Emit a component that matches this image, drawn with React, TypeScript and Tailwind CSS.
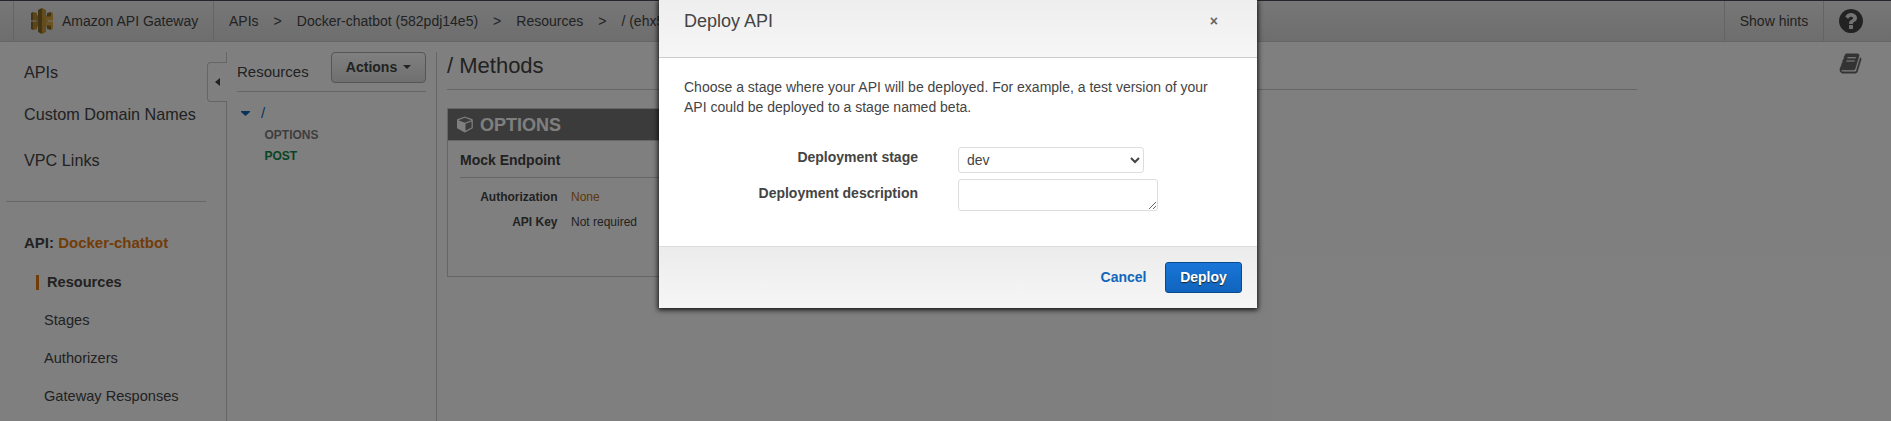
import React from "react";

const CUBE =
  "M896 1629l640-349v-636l-640 233v752zM832 765l698-254-698-254-698 254zM1664 512v768q0 35-18 65t-49 47l-704 384q-28 16-61 16t-61-16l-704-384q-31-17-49-47t-18-65v-768q0-40 23-73t61-47l704-256q22-8 44-8t44 8l704 256q38 14 61 47t23 73z";
const QUESTION =
  "M1024 1376v-192q0-14-9-23t-23-9h-192q-14 0-23 9t-9 23v192q0 14 9 23t23 9h192q14 0 23-9t9-23zm256-672q0-88-55.5-163t-138.5-116-170-41q-243 0-371 213-15 24 8 42l132 100q7 6 19 6 16 0 25-12 53-68 86-92 34-24 86-24 48 0 85.5 26t37.5 59q0 38-20 61t-68 45q-63 28-115.5 86.5t-52.5 125.5v36q0 14 9 23t23 9h192q14 0 23-9t9-23q0-19 21.5-49.5t54.5-49.5q32-18 49-28.5t46-35 44.5-48 28-60.5 12.5-81zm384 192q0 209-103 385.5t-279.5 279.5-385.5 103-385.5-103-279.5-279.5-103-385.5 103-385.5 279.5-279.5 385.5-103 385.5 103 279.5 279.5 103 385.5z";
const BOOK =
  "M1703 478q40 57 18 129l-275 906q-19 64-76.5 107.5t-122.5 43.5h-923q-77 0-148.5-53.5t-99.5-131.5q-24-67-2-127 0-4 3-27t4-37q1-8-3-21.5t-3-19.5q2-11 8-21t16.5-23.5 16.5-23.5q23-38 45-91.5t30-91.5q3-10 .5-30t-.5-28q3-11 17-28t17-23q21-36 42-92t25-90q1-9-2.5-32t.5-28q4-13 22-30.5t22-22.5q19-26 42.5-84.5t27.5-96.5q1-8-3-25.5t-2-26.5q2-8 9-18t18-23 17-21q8-12 16.5-30.5t15-35 16-36 19.5-32 26.5-23.5 36-11.5 47.5 5.5l-1 3q38-9 51-9h761q74 0 114 56t18 130l-274 906q-36 119-71.5 153.5t-128.5 34.5h-869q-27 0-38 15-11 16-1 43 24 70 144 70h923q29 0 56-15.5t35-41.5l300-987q7-22 5-57 38 15 59 43zm-1064 2q-4 13 2 22.5t20 9.5h608q13 0 25.5-9.5t16.5-22.5l21-64q4-13-2-22.5t-20-9.5h-608q-13 0-25.5 9.5t-16.5 22.5zm-83 256q-4 13 2 22.5t20 9.5h608q13 0 25.5-9.5t16.5-22.5l21-64q4-13-2-22.5t-20-9.5h-608q-13 0-25.5 9.5t-16.5 22.5z";

function GatewayLogo() {
  return (
    <svg width="22" height="26" viewBox="0 0 22 26">
      <path fill="#876929" d="M0 5l2-1v8.5H0zM0 13.5h2V22l-2-1zM5 7.5h12v5H5zM5 13.5h12v5H5z" />
      <path fill="#B88A30" d="M2 4l4 1v3h1v4.5H2zM2 22l4-1v-3h1v-4.5H2z" />
      <path fill="#D9A741" d="M20 4l2 1v7.5h-7V8h5zM20 22l2-1v-7.5h-7V18h5z" />
      <path fill="#876929" d="M16 5l4-1v4.5h-4zM16 17.5h4V22l-4-1z" />
      <path fill="#876929" d="M7 2l4-2v26l-4-2z" />
      <path fill="#C7983A" d="M11 0l4 2v22l-4 2z" />
    </svg>
  );
}

function Header() {
  return (
    <header className="flex h-[42px] shrink-0 border-b border-t border-b-[#ccc] border-t-[#4a4a5a] bg-linear-to-b from-[#eeeeee] to-[#dcdcdc] text-sm">
      <div className="w-[13px]" />
      <div className="flex w-[201px] items-center border-x border-[#c8c8c8] pl-[17px]">
        <GatewayLogo />
        <span className="ml-[9px]">Amazon API Gateway</span>
      </div>
      <nav className="flex grow items-center gap-[15px] whitespace-nowrap pl-[15px]">
        <span>APIs</span>
        <span>&gt;</span>
        <span>Docker-chatbot (582pdj14e5)</span>
        <span>&gt;</span>
        <span>Resources</span>
        <span>&gt;</span>
        <span>/ (ehx5</span>
      </nav>
      <div className="flex w-[100px] items-center justify-center border-x border-[#c8c8c8]">Show hints</div>
      <div className="flex w-[67px] items-center pl-[13px]">
        <svg width="28" height="28" viewBox="0 0 1792 1792" fill="#444">
          <path d={QUESTION} />
        </svg>
      </div>
    </header>
  );
}

function Sidebar() {
  return (
    <aside className="flex w-[226px] shrink-0 flex-col">
      <ul className="flex flex-col pl-6 text-[16.2px] leading-6">
        <li className="mt-[18px]">APIs</li>
        <li className="mt-[18px]">Custom Domain Names</li>
        <li className="mt-[22px]">VPC Links</li>
      </ul>
      <div className="ml-[6px] mt-[29px] h-px w-[200px] bg-[#ccc]" />
      <div className="ml-6 mt-[31px] text-[15px] font-bold leading-5">
        API: <span className="text-[#e47911]">Docker-chatbot</span>
      </div>
      <ul className="flex flex-col text-[14.6px] leading-[38px]">
        <li className="mt-[10px] flex h-[38px] items-center pl-9 font-bold">
          <span className="mr-2 h-[15px] w-[3px] bg-[#e47911]" />
          Resources
        </li>
        <li className="pl-11">Stages</li>
        <li className="pl-11">Authorizers</li>
        <li className="pl-11">Gateway Responses</li>
      </ul>
    </aside>
  );
}

function ResourceTree() {
  return (
    <section className="relative mt-[10px] w-[211px] shrink-0 border-x border-[#ccc] pl-[10px] pr-[10px]">
      <div className="absolute -left-[20px] top-[10px] flex h-10 w-5 items-center justify-center rounded-l border border-r-0 border-[#ccc] bg-white">
        <svg width="5" height="8" viewBox="0 0 5 8" fill="#444">
          <path d="M5 0v8L0 4z" />
        </svg>
      </div>
      <div className="absolute -left-px top-[11px] h-[38px] w-px bg-white" />
      <div className="flex h-[40px] items-start justify-between border-b border-[#ccc]">
        <span className="mt-[10px] text-[15px] leading-5">Resources</span>
        <button className="flex h-[31px] w-[95px] items-center justify-center gap-[6px] rounded border border-[#aaa] bg-linear-to-b from-white to-[#e0e0e0] pb-px text-sm font-bold">
          Actions
          <svg width="8" height="4" viewBox="0 0 8 4" fill="#444">
            <path d="M0 0h8L4 4z" />
          </svg>
        </button>
      </div>
      <div className="mt-[11px] flex h-5 items-center text-sm text-[#146eb4]">
        <svg className="ml-1" width="9" height="5" viewBox="0 0 9 5" fill="#1166bb">
          <path d="M0 0h9v1L4.5 5 0 1z" />
        </svg>
        <span className="ml-[11px] text-[15px]">/</span>
      </div>
      <div className="mt-[2px] pl-[27.5px] text-xs font-bold leading-[21px]">
        <div className="text-[#7c7c7c]">OPTIONS</div>
        <div className="text-[#118844]">POST</div>
      </div>
    </section>
  );
}

function Methods() {
  return (
    <main className="ml-[10px] w-[1190px] shrink-0">
      <h1 className="mt-[10px] h-[38px] border-b border-[#ccc] text-[22px] leading-7">/ Methods</h1>
      <div className="mt-[18px] h-[169px] w-[570px] border border-[#ccc]">
        <div className="flex h-8 items-center border-b border-[#ccc] bg-[#777] pl-[9px] text-lg font-bold text-white">
          <svg className="mr-[6px]" width="17" height="17" viewBox="0 64 1792 1792" fill="#fff">
            <path d={CUBE} />
          </svg>
          OPTIONS
        </div>
        <div className="ml-3">
          <div className="h-[37px] border-b border-[#ccc] pt-[9px] text-sm font-bold leading-5">Mock Endpoint</div>
          <dl className="mt-[7px] grid grid-cols-[97.5px_1fr] gap-x-[13.5px] text-xs leading-[25px]">
            <dt className="text-right font-bold">Authorization</dt>
            <dd className="text-[#c07010]">None</dd>
            <dt className="text-right font-bold">API Key</dt>
            <dd>Not required</dd>
          </dl>
        </div>
      </div>
    </main>
  );
}

function DeployDialog() {
  return (
    <div className="absolute left-[659px] top-0 flex h-[308px] w-[598px] flex-col bg-white text-sm text-[#444] shadow-[0_1px_5px_1px_rgba(0,0,0,0.85)]">
      <div className="flex h-[58px] items-start justify-between border-b border-[#ccc] bg-linear-to-b from-[#eeeeee] to-[#f6f6f6] pl-[25px] pr-[39px]">
        <h2 className="mt-[9px] text-lg leading-6">Deploy API</h2>
        <span className="mt-[11px] font-bold leading-5 text-[#666]">×</span>
      </div>
      <p className="ml-[25px] mt-[19px] w-[540px] leading-5">
        Choose a stage where your API will be deployed. For example, a test version of your API could be deployed to a
        stage named beta.
      </p>
      <div className="mt-[30px] flex items-start">
        <label className="w-[259px] text-right font-bold leading-5">Deployment stage</label>
        <select className="ml-10 h-[26px] w-[186px] rounded-[3px] border border-[#ddd] bg-white px-1 text-sm">
          <option>dev</option>
        </select>
      </div>
      <div className="mt-[6px] flex items-start">
        <label className="mt-1 w-[259px] text-right font-bold leading-5">Deployment description</label>
        <textarea className="ml-10 h-8 w-[200px] rounded-[3px] border border-[#ddd] bg-white" />
      </div>
      <div className="mt-auto flex h-[62px] items-center justify-end border-t border-[#ddd] bg-linear-to-b from-[#ececec] to-[#f6f6f6] pr-[15px] font-bold">
        <span className="mb-[2px] mr-[18.5px] text-[#1166bb]">Cancel</span>
        <button className="h-[31px] w-[77px] rounded-[3px] border border-[#0a4a8c] bg-linear-to-b from-[#1976d8] to-[#1064bd] pb-[2px] text-white [text-shadow:0_1px_1px_#222]">
          Deploy
        </button>
      </div>
    </div>
  );
}

export default function App() {
  return (
    <div className="relative flex h-[421px] w-[1891px] flex-col overflow-hidden bg-white font-['Liberation_Sans',Arial,sans-serif] text-[#444]">
      <Header />
      <div className="flex min-h-0 grow">
        <Sidebar />
        <ResourceTree />
        <Methods />
        <div className="grow pl-[202px] pt-[10px]">
          <svg width="23" height="23" viewBox="0 0 1792 1792" fill="#666" stroke="#666" strokeWidth="30">
            <path d={BOOK} />
          </svg>
        </div>
      </div>
      <div className="absolute inset-0 bg-black/50" />
      <DeployDialog />
    </div>
  );
}
